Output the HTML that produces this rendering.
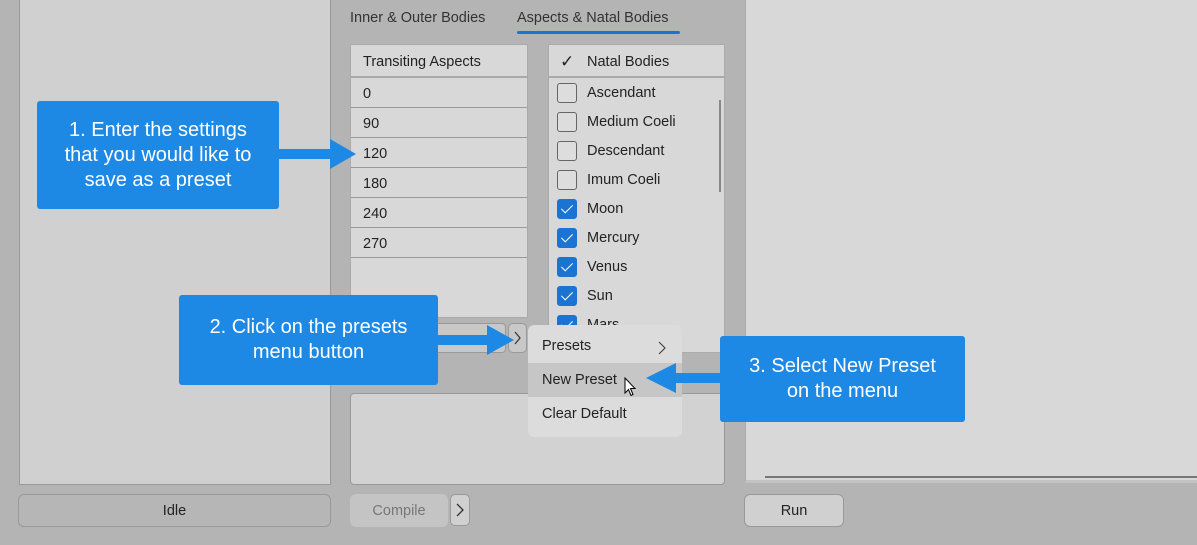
<!DOCTYPE html>
<html><head><meta charset="utf-8"><style>
*{box-sizing:border-box;margin:0;padding:0}
body{width:1197px;height:545px;background:#b4b4b4;position:relative;overflow:hidden;font-family:"Liberation Sans",Arial,sans-serif;font-size:14.5px;color:#222}
.a{position:absolute}
.btn{position:absolute;border:1px solid #999;border-radius:6px;background:#b6b6b6;text-align:center;line-height:32px;font-size:14.5px}
.row{height:30px;border-bottom:1px solid #999;padding-left:12px;line-height:32px;background:#d8d8d8}
.nb{height:29px;line-height:31px;padding-left:38px;position:relative}
.cb{position:absolute;left:8px;top:5px;width:20px;height:20px;border:1px solid #666;border-radius:3px;background:#ddd}
.cb.on{background:#1b74d4;border-color:#1b74d4}
.cb.on:after{content:"";position:absolute;left:6px;top:2px;width:5px;height:10px;border:solid #fff;border-width:0 1.5px 1.5px 0;transform:rotate(45deg)}
.call{position:absolute;background:#1e88e5;border-radius:3px;color:#fff;font-family:"Liberation Sans",Arial,sans-serif;font-size:20px;text-align:center;line-height:25px;display:flex;align-items:center;justify-content:center}
.mi{height:34px;line-height:34px;padding-left:14px}
.chev{position:absolute;border:1px solid #999;border-radius:5px;background:#c8c8c8}
</style></head><body>
<div class="a" style="left:19px;top:0;width:312px;height:485px;background:#d0d0d0;border:1px solid #999;border-top:none"></div>
<div class="btn" style="left:18px;top:494px;width:313px;height:33px">Idle</div>

<div class="a" style="left:350px;top:10px;color:#333">Inner &amp; Outer Bodies</div>
<div class="a" style="left:517px;top:10px;color:#333">Aspects &amp; Natal Bodies</div>
<div class="a" style="left:517px;top:31px;width:163px;height:3px;background:#1b74d4;border-radius:2px"></div>

<div class="a" style="left:350px;top:44px;width:178px;height:274px;background:#d8d8d8;border:1px solid #aaa">
<div class="row" style="height:33px;line-height:34px;border-bottom:2px solid #aaa">Transiting Aspects</div>
<div class="row">0</div><div class="row">90</div><div class="row">120</div><div class="row">180</div><div class="row">240</div><div class="row">270</div>
</div>
<div class="a" style="left:350px;top:323px;width:156px;height:30px;background:#c8c8c8;border:1px solid #999;border-radius:4px"></div>
<div class="chev" style="left:508px;top:323px;width:19px;height:30px"><svg width="17" height="28"><path d="M6 8 L11 14 L6 20" fill="none" stroke="#333" stroke-width="1.2"/></svg></div>

<div class="a" style="left:548px;top:44px;width:177px;height:309px;background:#d8d8d8;border:1px solid #aaa;overflow:hidden">
<div style="height:33px;line-height:34px;border-bottom:2px solid #aaa;padding-left:38px;position:relative"><span style="position:absolute;left:11px;font-size:17px;font-family:'DejaVu Sans',sans-serif">✓</span>Natal Bodies</div>
<div class="nb"><span class="cb"></span>Ascendant</div>
<div class="nb"><span class="cb"></span>Medium Coeli</div>
<div class="nb"><span class="cb"></span>Descendant</div>
<div class="nb"><span class="cb"></span>Imum Coeli</div>
<div class="nb"><span class="cb on"></span>Moon</div>
<div class="nb"><span class="cb on"></span>Mercury</div>
<div class="nb"><span class="cb on"></span>Venus</div>
<div class="nb"><span class="cb on"></span>Sun</div>
<div class="nb"><span class="cb on"></span>Mars</div>
<div class="a" style="left:170px;top:55px;width:2px;height:92px;background:#888"></div>
</div>

<div class="a" style="left:350px;top:393px;width:375px;height:92px;background:#d2d2d2;border:1px solid #999;border-radius:4px"></div>
<div class="btn" style="left:350px;top:494px;width:98px;height:33px;background:#c4c4c4;border-color:#c4c4c4;color:#777">Compile</div>
<div class="chev" style="left:450px;top:494px;width:20px;height:32px;background:#d0d0d0"><svg width="18" height="30"><path d="M6 9 L12 15 L6 21" fill="none" stroke="#333" stroke-width="1.3"/></svg></div>

<div class="a" style="left:528px;top:325px;width:154px;height:112px;background:#dcdcdc;border-radius:6px;padding-top:4px">
<div class="mi" style="position:relative">Presets<svg style="position:absolute;right:16px;top:12px" width="8" height="14"><path d="M1 1 L7 7 L1 13" fill="none" stroke="#444" stroke-width="1.2"/></svg></div>
<div class="mi" style="background:#c6c6c6">New Preset</div>
<div class="mi">Clear Default</div>
</div>
<svg class="a" style="left:624px;top:377px" width="14" height="22" viewBox="0 0 14 22"><path d="M1 1 L1 16 L4.5 12.5 L7 18.5 L9 17.5 L6.5 11.5 L11 11.5 Z" fill="#fff" stroke="#000" stroke-width="1"/></svg>

<div class="a" style="left:745px;top:0;width:452px;height:483px;background:#d8d8d8;border-left:1px solid #aaa;border-bottom:3px solid #c2c2c2"></div>
<div class="a" style="left:765px;top:476px;width:432px;height:2px;background:#777"></div>
<div class="btn" style="left:744px;top:494px;width:100px;height:33px;background:#d0d0d0">Run</div>

<div class="call" style="left:37px;top:101px;width:242px;height:108px">1. Enter the settings<br>that you would like to<br>save as a preset</div>
<svg class="a" style="left:278px;top:138px" width="80" height="32"><path d="M0 11 H52 V1 L78 16 L52 31 V21 H0 Z" fill="#1e88e5"/></svg>
<div class="call" style="left:179px;top:295px;width:259px;height:90px">2. Click on the presets<br>menu button</div>
<svg class="a" style="left:437px;top:324px" width="80" height="32"><path d="M0 11 H50 V1 L77 16 L50 31 V21 H0 Z" fill="#1e88e5"/></svg>
<div class="call" style="left:720px;top:336px;width:245px;height:86px">3. Select New Preset<br>on the menu</div>
<svg class="a" style="left:644px;top:362px" width="78" height="32"><path d="M78 11 H32 V1 L2 16 L32 31 V21 H78 Z" fill="#1e88e5"/></svg>
</body></html>
